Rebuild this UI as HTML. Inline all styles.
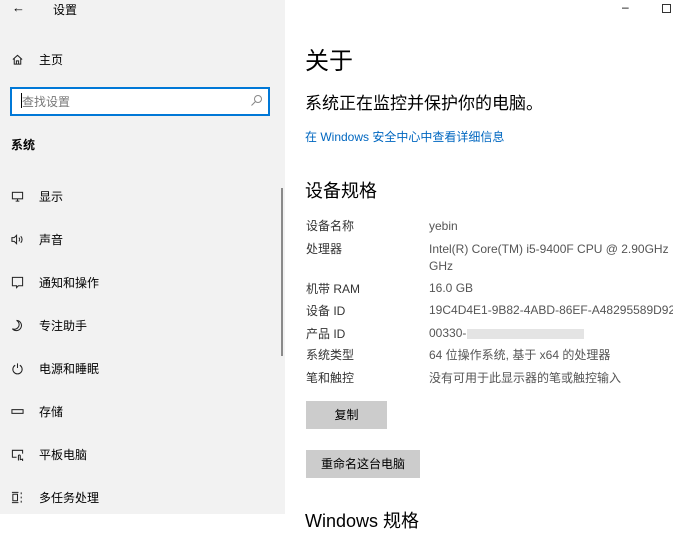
<!DOCTYPE html><html><head><meta charset="utf-8"><style>
*{margin:0;padding:0;box-sizing:border-box}
body{width:673px;height:514px;overflow:hidden;position:relative;background:#fff;font-family:"Liberation Sans","Noto Sans CJK SC",sans-serif;color:#000}
.side{position:absolute;left:0;top:0;width:285px;height:514px;background:#f2f2f2}
.t{position:absolute;white-space:nowrap}
.s{font-size:12px}
.ic{position:absolute;left:11px;width:13px;height:13px}
.lab{font-size:12px;color:#333}
.val{font-size:12px;color:#555}
.btn{position:absolute;background:#ccc;font-size:12px;text-align:center;line-height:28px}
</style></head><body>
<div class="side">
<div class="t" style="left:12px;top:0;font-size:13px">←</div>
<div class="t s" style="left:53px;top:1px">设置</div>
<svg class="ic" style="top:53px" viewBox="0 0 14 14" fill="none" stroke="#222" stroke-width="1.1"><path d="M2 7L7 2.5 12 7M3.5 6v6h7V6M5.8 12V8.5h2.4V12"/></svg>
<div class="t" style="left:39px;top:51px;font-size:12px">主页</div>
<div style="position:absolute;left:10px;top:87px;width:260px;height:29px;border:2px solid #0078d7;background:#fff"></div>
<div style="position:absolute;left:21px;top:93px;width:1px;height:15px;background:#000"></div>
<div class="t" style="left:22px;top:93px;font-size:12px;color:#777">查找设置</div>
<svg style="position:absolute;left:250px;top:94px" width="13" height="13" viewBox="0 0 13 13" fill="none" stroke="#888" stroke-width="1"><circle cx="8" cy="5" r="3.5"/><path d="M5.5 7.5L1.5 11.5"/></svg>
<div class="t" style="left:11px;top:136px;font-size:12px;font-weight:bold">系统</div>
<div style="position:absolute;left:281px;top:188px;width:2px;height:168px;background:#8a8a8a"></div>
<svg class="ic" style="top:190px" viewBox="0 0 14 14" fill="none" stroke="#222" stroke-width="1.1"><rect x="1.5" y="2.5" width="11" height="7"/><path d="M5 12h4M7 9.5v2.5"/></svg>
<div class="t lab" style="left:39px;top:188px;color:#000">显示</div>
<svg class="ic" style="top:233px" viewBox="0 0 14 14" fill="none" stroke="#222" stroke-width="1.1"><path d="M1 5h2.5L6 2.5v9L3.5 9H1zM8.5 5a3 3 0 0 1 0 4M10.5 3.5a5 5 0 0 1 0 7"/></svg>
<div class="t lab" style="left:39px;top:231px;color:#000">声音</div>
<svg class="ic" style="top:276px" viewBox="0 0 14 14" fill="none" stroke="#222" stroke-width="1.1"><path d="M1.5 1.5h11v9H8l-2 2v-2H1.5z"/></svg>
<div class="t lab" style="left:39px;top:274px;color:#000">通知和操作</div>
<svg class="ic" style="top:319px" viewBox="0 0 14 14" fill="none" stroke="#222" stroke-width="1.1"><path d="M6 1.5a5.5 5.5 0 1 1-4.5 9 5 5 0 0 0 4.5-9z"/></svg>
<div class="t lab" style="left:39px;top:317px;color:#000">专注助手</div>
<svg class="ic" style="top:362px" viewBox="0 0 14 14" fill="none" stroke="#222" stroke-width="1.1"><path d="M4.5 3.5a5 5 0 1 0 5 0M7 1.5v5"/></svg>
<div class="t lab" style="left:39px;top:360px;color:#000">电源和睡眠</div>
<svg class="ic" style="top:405px" viewBox="0 0 14 14" fill="none" stroke="#222" stroke-width="1.1"><rect x="1" y="5" width="12" height="4"/></svg>
<div class="t lab" style="left:39px;top:403px;color:#000">存储</div>
<svg class="ic" style="top:448px" viewBox="0 0 14 14" fill="none" stroke="#222" stroke-width="1.1"><path d="M6 10H1.5V2.5h11V6"/><path d="M8 13.5v-5a1 1 0 0 1 2 0v4l2.5-.5v2"/></svg>
<div class="t lab" style="left:39px;top:446px;color:#000">平板电脑</div>
<svg class="ic" style="top:491px" viewBox="0 0 14 14" fill="none" stroke="#222" stroke-width="1.1"><path d="M1 1.5h7M1 12.5h7M2 3.5h5v7H2zM11 1.5v2M11 6v2M11 10.5v2"/></svg>
<div class="t lab" style="left:39px;top:489px;color:#000">多任务处理</div>
</div>
<div class="t" style="left:622px;top:0;font-size:12px">–</div>
<div style="position:absolute;left:662px;top:4px;width:9px;height:9px;border:1px solid #333"></div>
<div class="t" style="left:305px;top:41px;font-size:24px">关于</div>
<div class="t" style="left:305px;top:89px;font-size:17px">系统正在监控并保护你的电脑。</div>
<div class="t" style="left:305px;top:128px;font-size:12px;color:#0067c0">在 Windows 安全中心中查看详细信息</div>
<div class="t" style="left:305px;top:177px;font-size:18px">设备规格</div>
<div class="t lab" style="left:306px;top:217px">设备名称</div><div class="t val" style="left:429px;top:219px">yebin</div>
<div class="t lab" style="left:306px;top:240px">处理器</div><div class="t val" style="left:429px;top:242px">Intel(R) Core(TM) i5-9400F CPU @ 2.90GHz</div>
<div class="t val" style="left:429px;top:259px">GHz</div>
<div class="t lab" style="left:306px;top:280px">机带 RAM</div><div class="t val" style="left:429px;top:281px">16.0 GB</div>
<div class="t lab" style="left:306px;top:302px">设备 ID</div><div class="t val" style="left:429px;top:303px">19C4D4E1-9B82-4ABD-86EF-A48295589D92</div>
<div class="t lab" style="left:306px;top:325px">产品 ID</div><div class="t val" style="left:429px;top:326px">00330-</div>
<div style="position:absolute;left:467px;top:329px;width:117px;height:10px;background:#e4e4e4"></div>
<div class="t lab" style="left:306px;top:346px">系统类型</div><div class="t val" style="left:429px;top:346px">64 位操作系统, 基于 x64 的处理器</div>
<div class="t lab" style="left:306px;top:369px">笔和触控</div><div class="t val" style="left:429px;top:369px">没有可用于此显示器的笔或触控输入</div>
<div class="btn" style="left:306px;top:401px;width:81px">复制</div>
<div class="btn" style="left:306px;top:450px;width:114px">重命名这台电脑</div>
<div class="t" style="left:305px;top:507px;font-size:18px">Windows 规格</div>
</body></html>
